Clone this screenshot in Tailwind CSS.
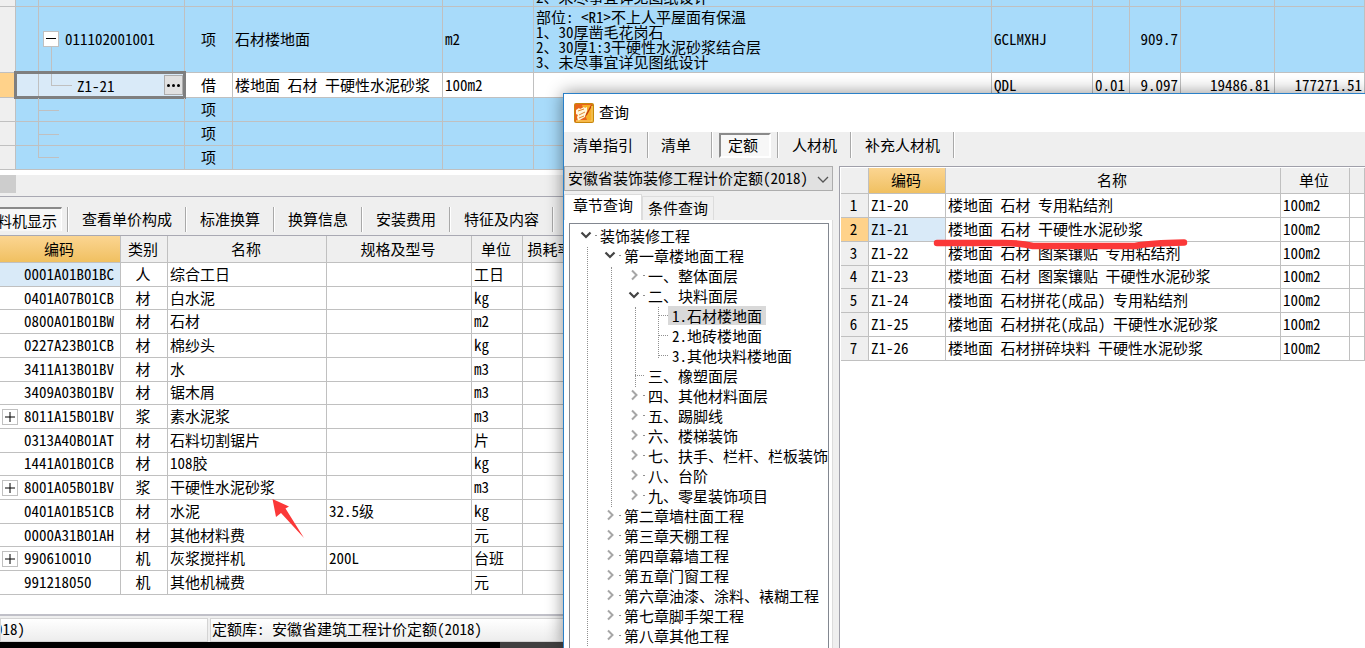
<!DOCTYPE html>
<html lang="zh-CN">
<head>
<meta charset="utf-8">
<title>查询</title>
<script src="https://cdn.jsdelivr.net/npm/@tailwindcss/browser@4"></script>
</head>
<body class="h-screen overflow-hidden bg-white font-['Noto_Sans_CJK_SC',sans-serif] text-[15px] leading-[15px] text-black [font-feature-settings:'hwid']">
<svg class="hidden">
  <symbol id="open" viewBox="0 0 12 12"><path d="M1.5 3.5 6 8l4.500-4.500" fill="none" stroke="#444" stroke-width="2.200"/></symbol>
  <symbol id="closed" viewBox="0 0 12 12"><path d="M4 1.500 8.500 6 4 10.500" fill="none" stroke="#a6a6a6" stroke-width="2"/></symbol>
</svg>

<main class="relative flex h-full flex-col overflow-hidden whitespace-nowrap">
  <!-- bill of quantities -->
  <table class="w-full table-fixed border-separate border-spacing-0 bg-[#a8dbfa] [&_td]:overflow-hidden [&_td]:border-r [&_td]:border-b [&_td]:border-[#c0c0c0] [&_td]:p-0 [&_td]:px-0.5">
    <colgroup><col class="w-4"><col class="w-[169px]"><col class="w-12"><col class="w-[210px]"><col class="w-[91px]"><col><col class="w-[101px]"><col class="w-[37px]"><col class="w-[51px]"><col class="w-[94px]"><col class="w-[90px]"></colgroup>
    <tbody>
      <tr>
        <td class="bg-[#efefef]"></td>
        <td class="relative"><div class="absolute inset-y-0 left-[22px] w-px bg-[#c0c0c0]"></div></td>
        <td></td><td></td><td></td>
        <td><div class="flex h-1.5 items-end overflow-hidden pb-0.5"><span>2、未尽事宜详见图纸设计</span></div></td>
        <td></td><td></td><td></td><td></td><td></td>
      </tr>
      <tr class="h-[66px] [&>td]:!pb-0.5">
        <td class="bg-[#efefef]"></td>
        <td class="relative">
          <div class="absolute inset-y-0 left-[22px] w-px bg-[#c0c0c0]"></div>
          <div class="absolute top-10 bottom-0 left-[35px] w-px bg-[#c0c0c0]"></div>
          <div class="flex items-center gap-1.5 pl-[25px]">
            <button class="flex size-4 shrink-0 items-center justify-center border border-[#c0c0c0] bg-white" aria-label="折叠"><span class="h-px w-2.5 bg-black"></span></button>
            <span>011102001001</span>
          </div>
        </td>
        <td class="text-center">项</td><td>石材楼地面</td><td>m2</td>
        <td>部位: &lt;R1&gt;不上人平屋面有保温<br>1、30厚凿毛花岗石<br>2、30厚1:3干硬性水泥砂浆结合层<br>3、未尽事宜详见图纸设计</td>
        <td>GCLMXHJ</td><td></td><td class="text-right">909.7</td><td></td><td></td>
      </tr>
      <tr class="h-[25px] bg-white [&>td]:!pb-0.5">
        <td class="bg-[#ffd28a]"></td>
        <td class="relative !overflow-visible">
          <div class="absolute -inset-y-0.5 -right-0.5 -left-0.5 flex items-center border-[3px] border-[#7f7f7f] bg-[#d9eaf8]">
            <div class="absolute inset-y-0 left-[21px] w-px bg-[#c0c0c0]"></div>
            <div class="absolute top-0 left-[34px] h-3 w-[21px] border-b border-l border-[#c0c0c0]"></div>
            <span class="grow pl-[60px]">Z1-21</span>
            <button class="flex h-5 w-[19px] items-center justify-center gap-0.5 border border-[#adadad] bg-[#e1e1e1]" aria-label="选择定额"><i class="size-[3px] rounded-full bg-black"></i><i class="size-[3px] rounded-full bg-black"></i><i class="size-[3px] rounded-full bg-black"></i></button>
          </div>
        </td>
        <td class="text-center">借</td><td>楼地面 石材 干硬性水泥砂浆</td><td>100m2</td><td></td><td>QDL</td>
        <td class="!pr-1 text-right">0.01</td><td class="text-right">9.097</td><td class="!pr-1 text-right">19486.81</td><td class="text-right">177271.51</td>
      </tr>
      <tr class="h-6 [&>td]:!pb-0.5">
        <td class="bg-[#efefef]"></td>
        <td class="relative"><div class="absolute inset-y-0 left-[22px] w-px bg-[#c0c0c0]"></div><div class="absolute top-3 left-[22px] h-px w-[21px] bg-[#c0c0c0]"></div></td>
        <td class="text-center">项</td><td></td><td></td><td></td><td></td><td></td><td></td><td></td><td></td>
      </tr>
      <tr class="h-6 [&>td]:!pb-0.5">
        <td class="bg-[#efefef]"></td>
        <td class="relative"><div class="absolute inset-y-0 left-[22px] w-px bg-[#c0c0c0]"></div><div class="absolute top-3 left-[22px] h-px w-[21px] bg-[#c0c0c0]"></div></td>
        <td class="text-center">项</td><td></td><td></td><td></td><td></td><td></td><td></td><td></td><td></td>
      </tr>
      <tr class="h-6 [&>td]:!pb-0.5">
        <td class="bg-[#efefef]"></td>
        <td class="relative"><div class="absolute top-0 left-[22px] h-3 w-[21px] border-b border-l border-[#c0c0c0]"></div></td>
        <td class="text-center">项</td><td></td><td></td><td></td><td></td><td></td><td></td><td></td><td></td>
      </tr>
    </tbody>
  </table>

  <div class="mt-[5px] h-[21px] bg-[#efefef]"><div class="h-[18px] w-4 bg-[#cdcdcd]"></div></div>

  <nav class="flex h-10 shrink-0 items-center border-y border-[#a9a9b3] bg-[#efefef] pt-1.5 [&>i]:h-[25px] [&>i]:w-0.5 [&>i]:border-r [&>i]:border-l [&>i]:border-l-[#a9a9a9] [&>i]:border-r-white [&>button+i~button]:pb-0.5">
    <button class="flex h-6 w-[62px] items-center justify-end overflow-hidden border-t-2 border-r border-t-[#8a8a8a] border-r-white bg-[#f7f7f7] pr-1"><span>工料机显示</span></button>
    <i class="ml-[5px]"></i><button class="px-[13px]">查看单价构成</button>
    <i></i><button class="px-[13px]">标准换算</button>
    <i></i><button class="px-[13px]">换算信息</button>
    <i></i><button class="px-[13px]">安装费用</button>
    <i></i><button class="px-[13px]">特征及内容</button><i></i>
  </nav>

  <!-- resources of the selected item -->
  <table class="h-[359px] w-full table-fixed border-separate border-spacing-0 [&_td]:border-r [&_td]:border-b [&_td]:border-[#c0c0c0] [&_td]:p-0 [&_td]:px-0.5 [&_td]:pb-0.5 [&_td:nth-child(2)]:pr-1 [&_td:nth-child(2)]:text-center [&_th]:border-r [&_th]:border-b [&_th]:border-[#c0c0c0] [&_th]:bg-[#efefef] [&_th]:p-0 [&_th]:pr-0.5 [&_th]:pb-0.5 [&_th]:font-normal [&_td:first-child]:pl-6 [&_button]:absolute [&_button]:top-1 [&_button]:left-0.5 [&_button]:size-4 [&_button]:border [&_button]:border-[#c0c0c0] [&_button]:bg-white">
    <colgroup><col class="w-[121px]"><col class="w-[47px]"><col class="w-[159px]"><col class="w-[145px]"><col class="w-[51px]"><col class="w-[57px]"><col></colgroup>
    <thead><tr class="h-[27px]"><th class="!bg-linear-to-b from-[#fbd591] to-[#f0c060]">编码</th><th>类别</th><th>名称</th><th>规格及型号</th><th>单位</th><th>损耗率</th><th></th></tr></thead>
    <tbody>
      <tr><td class="bg-[#d9eaf8]">0001A01B01BC</td><td>人</td><td>综合工日</td><td></td><td>工日</td><td></td><td></td></tr>
      <tr><td>0401A07B01CB</td><td>材</td><td>白水泥</td><td></td><td>kg</td><td></td><td></td></tr>
      <tr><td>0800A01B01BW</td><td>材</td><td>石材</td><td></td><td>m2</td><td></td><td></td></tr>
      <tr><td>0227A23B01CB</td><td>材</td><td>棉纱头</td><td></td><td>kg</td><td></td><td></td></tr>
      <tr><td>3411A13B01BV</td><td>材</td><td>水</td><td></td><td>m3</td><td></td><td></td></tr>
      <tr><td>3409A03B01BV</td><td>材</td><td>锯木屑</td><td></td><td>m3</td><td></td><td></td></tr>
      <tr><td class="relative"><button aria-label="展开"><svg viewBox="0 0 14 14"><path d="M2 7h10M7 2v10" stroke="#000"/></svg></button>8011A15B01BV</td><td>浆</td><td>素水泥浆</td><td></td><td>m3</td><td></td><td></td></tr>
      <tr><td>0313A40B01AT</td><td>材</td><td>石料切割锯片</td><td></td><td>片</td><td></td><td></td></tr>
      <tr><td>1441A01B01CB</td><td>材</td><td>108胶</td><td></td><td>kg</td><td></td><td></td></tr>
      <tr><td class="relative"><button aria-label="展开"><svg viewBox="0 0 14 14"><path d="M2 7h10M7 2v10" stroke="#000"/></svg></button>8001A05B01BV</td><td>浆</td><td>干硬性水泥砂浆</td><td></td><td>m3</td><td></td><td></td></tr>
      <tr><td>0401A01B51CB</td><td>材</td><td>水泥</td><td>32.5级</td><td>kg</td><td></td><td></td></tr>
      <tr><td>0000A31B01AH</td><td>材</td><td>其他材料费</td><td></td><td>元</td><td></td><td></td></tr>
      <tr><td class="relative"><button aria-label="展开"><svg viewBox="0 0 14 14"><path d="M2 7h10M7 2v10" stroke="#000"/></svg></button>990610010</td><td>机</td><td>灰浆搅拌机</td><td>200L</td><td>台班</td><td></td><td></td></tr>
      <tr><td>991218050</td><td>机</td><td>其他机械费</td><td></td><td>元</td><td></td><td></td></tr>
    </tbody>
  </table>

  <footer class="mt-auto shrink-0">
    <div class="flex h-7 gap-0.5 border-t-2 border-[#c0c0c8] bg-[#efefef] pt-0.5">
      <div class="w-[208px] border border-[#d4d4d4] bg-linear-to-b from-white to-[#ededed]"><div class="flex h-full w-6 items-center justify-end overflow-hidden pb-1"><span>计价定额(2018)</span></div></div>
      <div class="flex grow items-center border border-[#d4d4d4] bg-linear-to-b from-white to-[#ededed] px-px pb-1">定额库: 安徽省建筑工程计价定额(2018)</div>
    </div>
    <div class="h-1.5 bg-black pl-[500px]"><div class="h-full bg-[#404040]"></div></div>
  </footer>

  <svg class="absolute top-[498px] left-[271px] h-10 w-[34px]" viewBox="0 0 34 40"><path d="M1.500 1 18 8.500 14.500 10.500 33 40 10 15 5 19Z" fill="#fb3838"/></svg>

  <!-- query window -->
  <section class="absolute top-[93px] right-0 bottom-0 left-[563px] flex flex-col border-t border-l border-[#2a80c8] bg-[#efefef] shadow-[0_0_16px_rgba(0,0,0,0.45)]">
    <header class="flex h-[38px] shrink-0 items-center gap-[5px] bg-white pl-2.5">
      <svg class="size-5" viewBox="0 0 20 20"><rect width="20" height="20" rx="2" fill="#c8860c"/><rect x="1" y="1" width="17" height="18" rx="1" fill="#e8641a"/><path d="M8 2h9v15h-4z" fill="#f6ae25"/><path d="M2 7l3-2 1 1 4-2 1 1 2-1v4l-2 6-7 4-1-4 1-2-2-1z" fill="#fff6dc"/><path d="M4 8l6-2M5 12l6-3M5 15l5-2" stroke="#e08830"/><path d="M17 2 12 11l-1 3 2-2 5-9z" fill="#c03a10"/><path d="M2 18h16V3" fill="none" stroke="#fbd35a" stroke-width="1.500"/></svg>
      <h1 class="pb-1">查询</h1>
    </header>
    <nav class="flex h-[34px] shrink-0 items-start [&>button]:h-[26px] [&>button]:pb-0.5 [&>i]:h-[26px] [&>i]:w-0.5 [&>i]:border-r [&>i]:border-l [&>i]:border-l-[#a9a9a9] [&>i]:border-r-white">
      <button class="pr-3.5 pl-[9px]">清单指引</button><i></i>
      <button class="pr-5 pl-3">清单</button><i></i>
      <button class="mx-1.5 mt-px !h-[25px] w-[52px] border-2 border-t-[#8a8a8a] border-r-white border-b-white border-l-[#8a8a8a] bg-[#f7f7f7] pr-1">定额</button><i></i>
      <button class="px-[13px]">人材机</button><i></i>
      <button class="px-[13px]">补充人材机</button><i></i>
    </nav>
    <div class="flex min-h-0 grow gap-1.5">
      <div class="flex w-[269px] shrink-0 flex-col">
        <div class="relative h-[25px] shrink-0">
          <select aria-label="定额库" class="size-full appearance-none border border-[#adadad] bg-[#e1e1e1] pb-0.5 pl-[3px] leading-5"><option>安徽省装饰装修工程计价定额(2018)</option></select>
          <svg class="pointer-events-none absolute top-2 right-1 h-3 w-3" viewBox="0 0 12 12"><path d="M1 3l5 5 5-5" fill="none" stroke="#555" stroke-width="1.300"/></svg>
        </div>
        <div class="mt-[3px] flex h-[26px] shrink-0 items-end">
          <button class="h-full border border-b-0 border-[#dcdcdc] bg-white px-2 pb-1.5">章节查询</button>
          <button class="h-6 border border-b-0 border-[#dcdcdc] bg-[#f0f0f0] px-[5px] pb-0.5">条件查询</button>
        </div>
        <div class="flex min-h-0 grow border-r border-[#dcdcdc] bg-white pt-[3px] pr-[3px] pl-[5px]">
          <div class="relative grow overflow-hidden border border-b-0 border-[#828790] pt-px">
            <div class="absolute top-[23px] bottom-0.5 left-[17px] border-l border-dotted border-[#909090]"></div>
            <div class="absolute top-[43px] left-[41px] h-60 border-l border-dotted border-[#909090]"></div>
            <div class="absolute top-[83px] left-[65px] h-20 border-l border-dotted border-[#909090]"></div>
            <div class="absolute top-[83px] left-[88px] h-[51px] border-l border-dotted border-[#909090]"></div>
            <ul class="relative pl-2.5 [&_a>i]:mr-[3px] [&_a>i]:h-px [&_a>i]:w-0.5 [&_a>i]:bg-[#909090] [&_li>a]:flex [&_li>a]:h-5 [&_li>a]:items-center [&_svg]:mr-[3px] [&_svg]:size-3 [&_ul]:pl-6">
              <li><a href="#"><svg><use href="#open"/></svg><i></i>装饰装修工程</a>
                <ul>
                  <li><a href="#"><svg><use href="#open"/></svg><i></i>第一章楼地面工程</a>
                    <ul>
                      <li><a href="#"><svg><use href="#closed"/></svg><i></i>一、整体面层</a></li>
                      <li><a href="#"><svg><use href="#open"/></svg><i></i>二、块料面层</a>
                        <ul>
                          <li><a href="#"><span class="ml-1.5 w-2.5 border-t border-dotted border-[#909090]"></span><span class="flex h-[19px] items-center bg-[#d9d9d9] px-1">1.石材楼地面</span></a></li>
                          <li><a href="#"><span class="ml-1.5 w-2.5 border-t border-dotted border-[#909090]"></span><span class="px-1">2.地砖楼地面</span></a></li>
                          <li><a href="#"><span class="ml-1.5 w-2.5 border-t border-dotted border-[#909090]"></span><span class="px-1">3.其他块料楼地面</span></a></li>
                        </ul>
                      </li>
                      <li><a href="#"><span class="mr-1 ml-[7px] w-[9px] border-t border-dotted border-[#909090]"></span>三、橡塑面层</a></li>
                      <li><a href="#"><svg><use href="#closed"/></svg><i></i>四、其他材料面层</a></li>
                      <li><a href="#"><svg><use href="#closed"/></svg><i></i>五、踢脚线</a></li>
                      <li><a href="#"><svg><use href="#closed"/></svg><i></i>六、楼梯装饰</a></li>
                      <li><a href="#"><svg class="shrink-0"><use href="#closed"/></svg><i class="shrink-0"></i>七、扶手、栏杆、栏板装饰</a></li>
                      <li><a href="#"><svg><use href="#closed"/></svg><i></i>八、台阶</a></li>
                      <li><a href="#"><svg><use href="#closed"/></svg><i></i>九、零星装饰项目</a></li>
                    </ul>
                  </li>
                  <li><a href="#"><svg><use href="#closed"/></svg><i></i>第二章墙柱面工程</a></li>
                  <li><a href="#"><svg><use href="#closed"/></svg><i></i>第三章天棚工程</a></li>
                  <li><a href="#"><svg><use href="#closed"/></svg><i></i>第四章幕墙工程</a></li>
                  <li><a href="#"><svg><use href="#closed"/></svg><i></i>第五章门窗工程</a></li>
                  <li><a href="#"><svg><use href="#closed"/></svg><i></i>第六章油漆、涂料、裱糊工程</a></li>
                  <li><a href="#"><svg><use href="#closed"/></svg><i></i>第七章脚手架工程</a></li>
                  <li><a href="#"><svg><use href="#closed"/></svg><i></i>第八章其他工程</a></li>
                </ul>
              </li>
            </ul>
          </div>
        </div>
      </div>
      <div class="relative grow border-t border-l border-[#a0a0aa] bg-white pt-px pl-px">
        <table class="h-[193px] w-full table-fixed border-separate border-spacing-0 [&_td]:border-r [&_td]:border-b [&_td]:border-[#c0c0c0] [&_td]:p-0 [&_td]:px-0.5 [&_td]:pb-0.5 [&_th]:border-r [&_th]:border-b [&_th]:border-[#c0c0c0] [&_th]:bg-[#efefef] [&_th]:p-0 [&_th]:pr-0.5 [&_th]:pb-0.5 [&_th]:font-normal">
          <colgroup><col class="w-7"><col class="w-[77px]"><col><col class="w-[69px]"><col class="w-[15px]"></colgroup>
          <thead><tr class="h-[26px]"><th></th><th class="!bg-linear-to-b from-[#fbd591] to-[#f0c060]">编码</th><th>名称</th><th>单位</th><th></th></tr></thead>
          <tbody>
            <tr><th>1</th><td>Z1-20</td><td>楼地面 石材 专用粘结剂</td><td>100m2</td><td></td></tr>
            <tr><th class="!bg-[#ffd28a]">2</th><td class="bg-[#d9eaf8]">Z1-21</td><td>楼地面 石材 干硬性水泥砂浆</td><td>100m2</td><td></td></tr>
            <tr><th>3</th><td>Z1-22</td><td>楼地面 石材 图案镶贴 专用粘结剂</td><td>100m2</td><td></td></tr>
            <tr><th>4</th><td>Z1-23</td><td>楼地面 石材 图案镶贴 干硬性水泥砂浆</td><td>100m2</td><td></td></tr>
            <tr><th>5</th><td>Z1-24</td><td>楼地面 石材拼花(成品) 专用粘结剂</td><td>100m2</td><td></td></tr>
            <tr><th>6</th><td>Z1-25</td><td>楼地面 石材拼花(成品) 干硬性水泥砂浆</td><td>100m2</td><td></td></tr>
            <tr><th>7</th><td>Z1-26</td><td>楼地面 石材拼碎块料 干硬性水泥砂浆</td><td>100m2</td><td></td></tr>
          </tbody>
        </table>
        <svg class="absolute top-[70px] left-[92px] h-4 w-64" viewBox="0 0 256 16"><path d="M5 6H72Q88 6 101 9H203Q218 6 252 5.500" fill="none" stroke="#fb3838" stroke-width="6.500" stroke-linecap="round" stroke-linejoin="round"/></svg>
      </div>
    </div>
  </section>
</main>
</body>
</html>
